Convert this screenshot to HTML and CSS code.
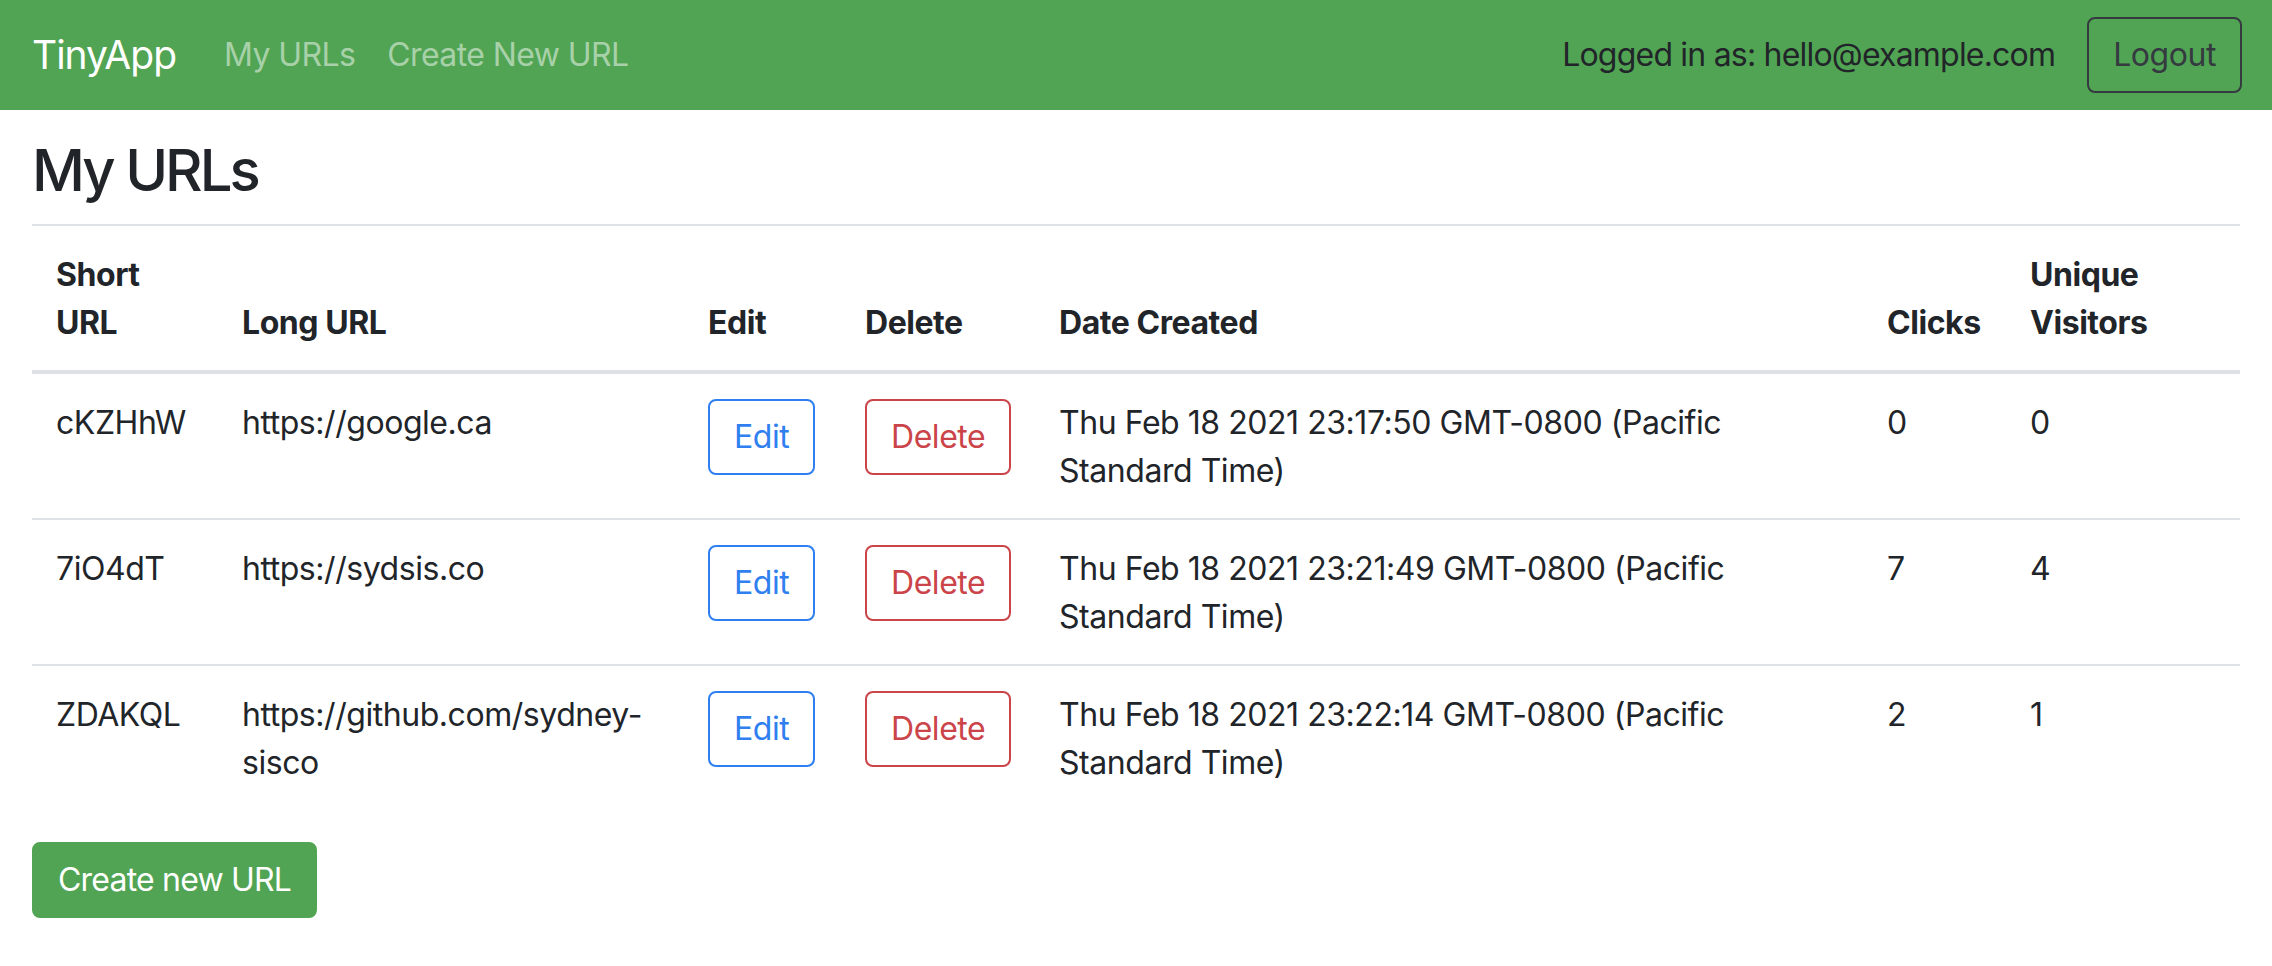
FILE: index.html
```html
<!DOCTYPE html>
<html lang="en">
<head>
<meta charset="utf-8">
<title>TinyApp</title>
<link rel="stylesheet" href="styles.css">
</head>
<body>
<nav class="navbar">
  <a class="brand" href="#">TinyApp</a>
  <div class="nav-links">
    <a class="nav-link" href="#">My URLs</a>
    <a class="nav-link" href="#">Create New URL</a>
  </div>
  <div class="nav-right">
    <span class="navbar-text">Logged in as: hello@example.com</span>
    <button class="btn btn-outline-dark">Logout</button>
  </div>
</nav>
<main class="container">
  <h1 class="title">My URLs</h1>
  <table class="table">
    <colgroup>
      <col class="c-short"><col class="c-long"><col class="c-edit"><col class="c-del"><col class="c-date"><col class="c-clicks"><col class="c-uniq">
    </colgroup>
    <thead>
      <tr>
        <th>Short URL</th>
        <th>Long URL</th>
        <th>Edit</th>
        <th>Delete</th>
        <th>Date Created</th>
        <th>Clicks</th>
        <th>Unique Visitors</th>
      </tr>
    </thead>
    <tbody>
      <tr>
        <td>cKZHhW</td>
        <td>https://google.ca</td>
        <td><button class="btn btn-outline-primary">Edit</button></td>
        <td><button class="btn btn-outline-danger">Delete</button></td>
        <td>Thu Feb 18 2021 23:17:50 GMT-0800 (Pacific Standard Time)</td>
        <td>0</td>
        <td>0</td>
      </tr>
      <tr>
        <td>7iO4dT</td>
        <td>https://sydsis.co</td>
        <td><button class="btn btn-outline-primary">Edit</button></td>
        <td><button class="btn btn-outline-danger">Delete</button></td>
        <td>Thu Feb 18 2021 23:21:49 GMT-0800 (Pacific Standard Time)</td>
        <td>7</td>
        <td>4</td>
      </tr>
      <tr>
        <td>ZDAKQL</td>
        <td>https://github.com/sydney-sisco</td>
        <td><button class="btn btn-outline-primary">Edit</button></td>
        <td><button class="btn btn-outline-danger">Delete</button></td>
        <td>Thu Feb 18 2021 23:22:14 GMT-0800 (Pacific Standard Time)</td>
        <td>2</td>
        <td>1</td>
      </tr>
    </tbody>
  </table>
  <button class="btn btn-success">Create new URL</button>
</main>
</body>
</html>
```

FILE: styles.css
```css
* { box-sizing: border-box; }

html, body {
  margin: 0;
  padding: 0;
}

body {
  font-family: Inter, "Noto Sans", "Liberation Sans", sans-serif;
  font-size: 32px;
  line-height: 48px;
  letter-spacing: -0.45px;
  color: #212529;
  background: #ffffff;
}

a { text-decoration: none; }

.navbar {
  height: 110px;
  background: #51a453;
  display: flex;
  align-items: center;
  padding: 0 30px 0 32px;
}

.brand {
  color: #ffffff;
  font-size: 39px;
  line-height: 60px;
  letter-spacing: -1px;
  margin-right: 32px;
}

.nav-links {
  display: flex;
  flex: 1;
}

.nav-link {
  color: #a8d1a9;
  padding: 0 16px;
  letter-spacing: -0.6px;
}

.nav-right {
  display: flex;
  align-items: center;
  gap: 32px;
}

.navbar-text {
  color: #212529;
  letter-spacing: -0.8px;
}

.btn {
  font-family: inherit;
  font-size: 32px;
  line-height: 48px;
  letter-spacing: -0.45px;
  padding: 12px 24px;
  border: 2px solid transparent;
  border-radius: 8px;
  background: transparent;
  cursor: pointer;
  display: inline-block;
}

.btn-outline-dark {
  color: #343a40;
  border-color: #343a40;
}

.btn-outline-primary {
  color: #2f7ff0;
  border-color: #2f7ff0;
}

.btn-outline-danger {
  color: #cb444a;
  border-color: #cb444a;
}

.btn-success {
  color: #ffffff;
  background: #51a453;
  border-color: #51a453;
  letter-spacing: -0.8px;
}

.container {
  padding: 0 32px;
}

.title {
  font-size: 58px;
  line-height: 77px;
  font-weight: 500;
  letter-spacing: -3px;
  margin: 22px 0 15px;
}

.table {
  width: 100%;
  border-collapse: collapse;
  table-layout: fixed;
  margin-bottom: 32px;
}

.c-short { width: 186px; }
.c-long { width: 466px; }
.c-edit { width: 157px; }
.c-del { width: 194px; }
.c-date { width: 828px; }
.c-clicks { width: 143px; }
.c-uniq { width: 234px; }

.table th,
.table td {
  padding: 25px 24px 23px;
  text-align: left;
  vertical-align: top;
  border-top: 2px solid #dee2e6;
}

.table th {
  font-weight: 700;
  vertical-align: bottom;
}

.table thead th {
  border-bottom: 4px solid #dee2e6;
}
```
